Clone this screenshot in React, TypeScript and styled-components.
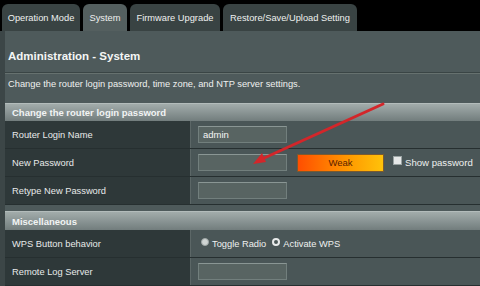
import React from "react";
import styled, { createGlobalStyle } from "styled-components";

const Global = createGlobalStyle`
  html, body { margin: 0; padding: 0; background: #000; }
  body { font-family: "Liberation Sans", Arial, sans-serif; width: 480px; height: 286px; overflow: hidden; }
`;

const Frame = styled.div`
  position: relative;
  width: 480px;
  height: 286px;
  overflow: hidden;
  background: #000;
`;

const TabBar = styled.div`
  display: flex;
  align-items: flex-end;
  gap: 3px;
  height: 31px;
  padding-left: 2px;
  background: #000;
`;

const Tab = styled.div<{ $w: number; $active?: boolean }>`
  width: ${(p) => p.$w}px;
  height: 27px;
  display: flex;
  align-items: center;
  justify-content: center;
  border-radius: 6px 6px 0 0;
  background: ${(p) => (p.$active ? "#545f5f" : "#394343")};
  color: #eef0ef;
  font-size: 9.3px;
  white-space: nowrap;
`;

const Body = styled.div`
  background: #3c4647;
  padding-left: 5px;
  height: 255px;
`;

const Panel = styled.div`
  background: #4e5a5b;
  height: 100%;
  display: flex;
  flex-direction: column;
`;

const Heading = styled.h1`
  margin: 0;
  padding: 19px 0 0 3px;
  height: 22px;
  font-size: 11.5px;
  font-weight: bold;
  color: #f4f6f5;
  border-bottom: 1px solid #3a4545;
  box-shadow: 0 1px 0 #66716f;
`;

const Desc = styled.p`
  margin: 0;
  padding: 6px 0 0 3px;
  height: 25px;
  font-size: 9.3px;
  color: #eef0ef;
  white-space: nowrap;
`;

const Section = styled.div`
  display: flex;
  flex-direction: column;
`;

const SectionHead = styled.div<{ $h: number }>`
  height: ${(p) => p.$h}px;
  display: flex;
  align-items: center;
  padding-left: 7px;
  background: linear-gradient(#a2acab, #727d7d);
  border-top: 1px solid #b3bcbb;
  color: #f2f4f4;
  font-size: 9.5px;
  font-weight: bold;
`;

const Row = styled.div`
  display: grid;
  grid-template-columns: 186px 1fr;
  height: 27px;
  border-bottom: 1px solid #262f30;
`;

const Label = styled.div`
  display: flex;
  align-items: center;
  padding-left: 7px;
  background: #2e3839;
  border-right: 1px solid #5c6767;
  color: #e8eaea;
  font-size: 9.3px;
  white-space: nowrap;
`;

const Value = styled.div`
  display: flex;
  align-items: center;
  padding-left: 7px;
  background: #4a5657;
  color: #eef0ef;
  font-size: 9.5px;
  white-space: nowrap;
`;

const Input = styled.div`
  flex: none;
  width: 83px;
  height: 15px;
  display: flex;
  align-items: center;
  padding-left: 4px;
  background: #586462;
  border: 1px solid #727f7d;
  border-top-color: #8a9694;
  color: #f5f5f5;
  font-size: 9.5px;
`;

const Meter = styled.div`
  flex: none;
  margin-left: 10px;
  width: 87px;
  height: 18px;
  display: flex;
  align-items: center;
  justify-content: center;
  background: linear-gradient(90deg, #ff4e00, #ff9a00 60%, #ffc20a);
  border: 1px solid #7a5a30;
  box-sizing: border-box;
  color: #5a2200;
  font-size: 9.5px;
`;

const Check = styled.span`
  flex: none;
  margin-left: 9px;
  width: 7px;
  height: 7px;
  background: #e6e8e8;
  border: 1px solid #9aa3a3;
  margin-top: -4px;
`;

const CheckText = styled.span`
  margin-left: 3px;
  font-size: 9.6px;
  color: #eef0ef;
`;

const Radio = styled.span<{ $ring?: boolean }>`
  flex: none;
  width: 8px;
  height: 8px;
  border-radius: 50%;
  box-sizing: border-box;
  margin-top: -3px;
  margin-left: ${(p) => (p.$ring ? 0 : 3)}px;
  background: ${(p) => (p.$ring ? "#4c5858" : "#cfd4d3")};
  border: ${(p) => (p.$ring ? "2px solid #e8eaea" : "1px solid #9ea6a5")};
`;

const RadioText = styled.span`
  margin: 0 6px 0 3px;
  font-size: 9.3px;
  color: #eef0ef;
`;

const Gap = styled.div`
  height: 6px;
`;

const Arrow = styled.svg`
  position: absolute;
  left: 0;
  top: 0;
  pointer-events: none;
`;

export default function App() {
  return (
    <Frame>
      <Global />
      <TabBar>
        <Tab $w={78}>Operation Mode</Tab>
        <Tab $w={44} $active>System</Tab>
        <Tab $w={90}>Firmware Upgrade</Tab>
        <Tab $w={134}>Restore/Save/Upload Setting</Tab>
      </TabBar>
      <Body>
        <Panel>
          <Heading>Administration - System</Heading>
          <Desc>Change the router login password, time zone, and NTP server settings.</Desc>
          <Section>
            <SectionHead $h={17}>Change the router login password</SectionHead>
            <Row>
              <Label>Router Login Name</Label>
              <Value>
                <Input>admin</Input>
              </Value>
            </Row>
            <Row>
              <Label>New Password</Label>
              <Value>
                <Input />
                <Meter>Weak</Meter>
                <Check />
                <CheckText>Show password</CheckText>
              </Value>
            </Row>
            <Row>
              <Label>Retype New Password</Label>
              <Value>
                <Input />
              </Value>
            </Row>
          </Section>
          <Gap />
          <Section>
            <SectionHead $h={18}>Miscellaneous</SectionHead>
            <Row>
              <Label>WPS Button behavior</Label>
              <Value>
                <Radio />
                <RadioText>Toggle Radio</RadioText>
                <Radio $ring />
                <RadioText>Activate WPS</RadioText>
              </Value>
            </Row>
            <Row>
              <Label>Remote Log Server</Label>
              <Value>
                <Input />
              </Value>
            </Row>
          </Section>
        </Panel>
      </Body>
      <Arrow width="480" height="286" viewBox="0 0 480 286">
        <line x1="383" y1="104" x2="262" y2="159" stroke="#d3262a" strokeWidth="3" strokeLinecap="round" />
        <polygon points="253,164 262,153 266,162" fill="#d3262a" />
      </Arrow>
    </Frame>
  );
}
